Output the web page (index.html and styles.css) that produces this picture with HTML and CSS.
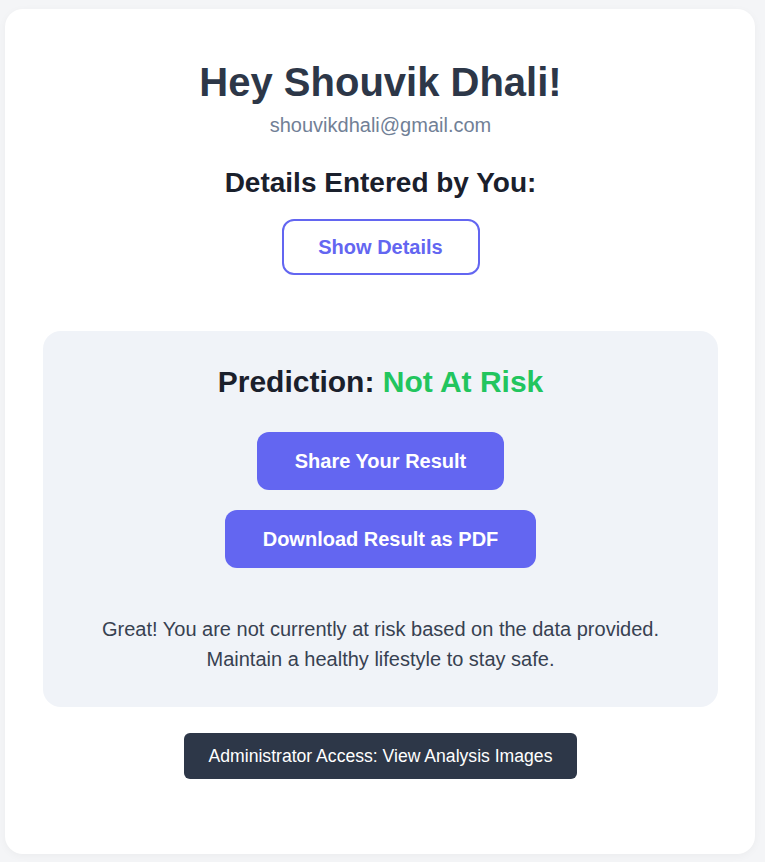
FILE: index.html
```html
<!DOCTYPE html>
<html lang="en">
<head>
<meta charset="utf-8">
<title>Result</title>
<link rel="stylesheet" href="styles.css">
</head>
<body>
<div class="page">
  <main class="card">
    <h1 class="greeting">Hey Shouvik Dhali!</h1>
    <p class="email">shouvikdhali@gmail.com</p>
    <h2 class="details-title">Details Entered by You:</h2>
    <button class="btn-outline">Show Details</button>

    <section class="result">
      <h2 class="prediction">Prediction: <span class="safe">Not At Risk</span></h2>
      <div class="actions">
        <button class="btn-primary">Share Your Result</button>
        <button class="btn-primary">Download Result as PDF</button>
      </div>
      <p class="message">Great! You are not currently at risk based on the data provided.<br>Maintain a healthy lifestyle to stay safe.</p>
    </section>

    <button class="btn-dark">Administrator Access: View Analysis Images</button>
  </main>
</div>
</body>
</html>
```
FILE: styles.css
```css
* { box-sizing: border-box; }
html, body { margin: 0; padding: 0; }
body {
  background: #f4f5f7;
  font-family: "Liberation Sans", Arial, sans-serif;
  width: 765px;
  height: 862px;
  overflow: hidden;
}
.page {
  padding: 9px 10px 8px 5px;
}
.card {
  background: #ffffff;
  border-radius: 18px;
  box-shadow: 0 2px 8px rgba(0,0,0,0.04);
  height: 845px;
  padding: 50px 37px 0 38px;
  display: flex;
  flex-direction: column;
  align-items: center;
  text-align: center;
}
.greeting {
  margin: 0;
  font-size: 40px;
  line-height: 46px;
  font-weight: 700;
  color: #2d3748;
}
.email {
  margin: 9px 0 0;
  font-size: 20px;
  line-height: 23px;
  color: #718096;
}
.details-title {
  margin: 30px 0 0;
  font-size: 28px;
  line-height: 32px;
  font-weight: 700;
  color: #1a202c;
}
.btn-outline {
  margin-top: 20px;
  width: 198px;
  height: 56px;
  border: 2px solid #6366f1;
  border-radius: 12px;
  background: #ffffff;
  color: #6366f1;
  font-family: inherit;
  font-size: 20px;
  font-weight: 700;
  padding: 0;
}
.result {
  margin-top: 56px;
  width: 100%;
  background: #f0f3f8;
  border-radius: 18px;
  padding: 33px 20px 33px;
  display: flex;
  flex-direction: column;
  align-items: center;
}
.prediction {
  margin: 0;
  font-size: 30px;
  line-height: 36px;
  font-weight: 700;
  color: #1a202c;
}
.safe { color: #22c55e; }
.actions {
  margin-top: 32px;
  display: flex;
  flex-direction: column;
  align-items: center;
  gap: 20px;
}
.btn-primary {
  height: 58px;
  padding: 0 38px;
  border: none;
  border-radius: 12px;
  background: #6366f1;
  color: #ffffff;
  font-family: inherit;
  font-size: 20px;
  font-weight: 700;
}
.message {
  margin: 46px 0 0;
  font-size: 20px;
  line-height: 30px;
  color: #374151;
}
.btn-dark {
  margin-top: 26px;
  height: 46px;
  padding: 0 25px;
  border: none;
  border-radius: 6px;
  background: #2d3748;
  color: #ffffff;
  font-family: inherit;
  font-size: 17.6px;
}
```
